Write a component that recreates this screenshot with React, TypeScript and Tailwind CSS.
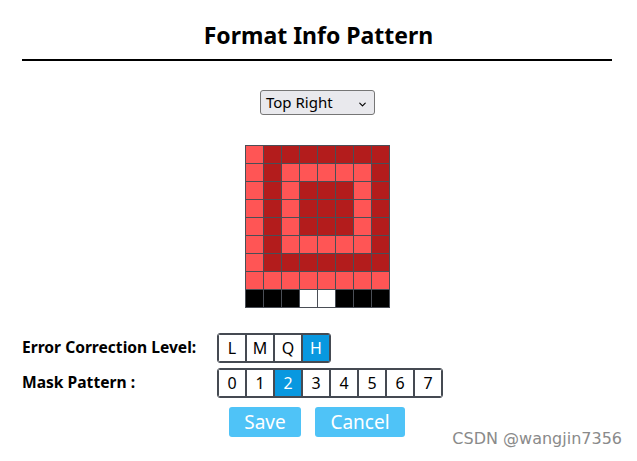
import { ChevronDown } from "lucide-react";

const L = "bg-[#ff5555]";
const D = "bg-[#b31c1c]";
const B = "bg-black";
const W = "bg-white";

// 8 x 9 format info cells
const rows: string[][] = [
  [L, D, D, D, D, D, D, D],
  [L, D, L, L, L, L, L, D],
  [L, D, L, D, D, D, L, D],
  [L, D, L, D, D, D, L, D],
  [L, D, L, D, D, D, L, D],
  [L, D, L, L, L, L, L, D],
  [L, D, D, D, D, D, D, D],
  [L, L, L, L, L, L, L, L],
  [B, B, B, W, W, B, B, B],
];

const levels = ["L", "M", "Q", "H"];
const masks = ["0", "1", "2", "3", "4", "5", "6", "7"];

const Group = ({ items, active }: { items: string[]; active: string }) => (
  <div className="flex border border-[#454a52] rounded-[3px] overflow-hidden">
    {items.map((it) => (
      <div
        key={it}
        className={
          "w-[28px] h-[28px] border border-[#454a52] flex items-center justify-center text-[16px] " +
          (it === active ? "bg-[#0898e0] text-white" : "bg-white text-black")
        }
      >
        {it}
      </div>
    ))}
  </div>
);

export default function App() {
  return (
    <div
      className="w-[637px] h-[461px] bg-white relative overflow-hidden"
      style={{ fontFamily: '"Noto Sans", sans-serif' }}
    >
      <div className="px-[22px] pt-[20px]">
        <h1 className="text-center text-[23px] font-bold leading-[30px] text-black">
          Format Info Pattern
        </h1>
        <div className="mt-[9px] h-[2px] bg-black w-[590px]" />

        <div className="flex justify-center mt-[29px]">
          <div className="relative w-[115px] h-[25px] border border-[#767676] rounded-[3px] bg-[#e9e9ed] flex items-center pl-[5px] text-[15px] text-black ml-[-2px]">
            Top Right
            <ChevronDown className="absolute right-[6px] top-[8px] w-[11px] h-[11px]" strokeWidth={2.5} />
          </div>
        </div>

        <div className="flex justify-center mt-[30px]">
          <div className="grid grid-cols-[repeat(8,17px)] auto-rows-[17px] gap-px bg-[#4a4e56] border border-[#4a4e56] ml-[-3px]">
            {rows.flatMap((r, i) =>
              r.map((c, j) => <div key={i * 8 + j} className={c} />)
            )}
          </div>
        </div>

        <div className="mt-[25px] flex flex-col gap-[5px]">
          <div className="flex items-center">
            <div className="w-[195px] text-[15.6px] font-bold text-black">Error Correction Level:</div>
            <Group items={levels} active="H" />
          </div>
          <div className="flex items-center">
            <div className="w-[195px] text-[15.6px] font-bold text-black">Mask Pattern :</div>
            <Group items={masks} active="2" />
          </div>
          <div className="flex gap-[14px] ml-[207px] mt-[4px]">
            <button className="w-[72px] h-[30px] bg-[#4fc3f7] rounded-[3px] text-white text-[19px] leading-none">
              Save
            </button>
            <button className="w-[90px] h-[30px] bg-[#4fc3f7] rounded-[3px] text-white text-[19px] leading-none">
              Cancel
            </button>
          </div>
        </div>
      </div>

      <div
        className="absolute right-[15px] bottom-[10px] text-[16px] text-[#8a8a8a]"
        style={{ fontFamily: '"DejaVu Sans", sans-serif' }}
      >
        CSDN @wangjin7356
      </div>
    </div>
  );
}
